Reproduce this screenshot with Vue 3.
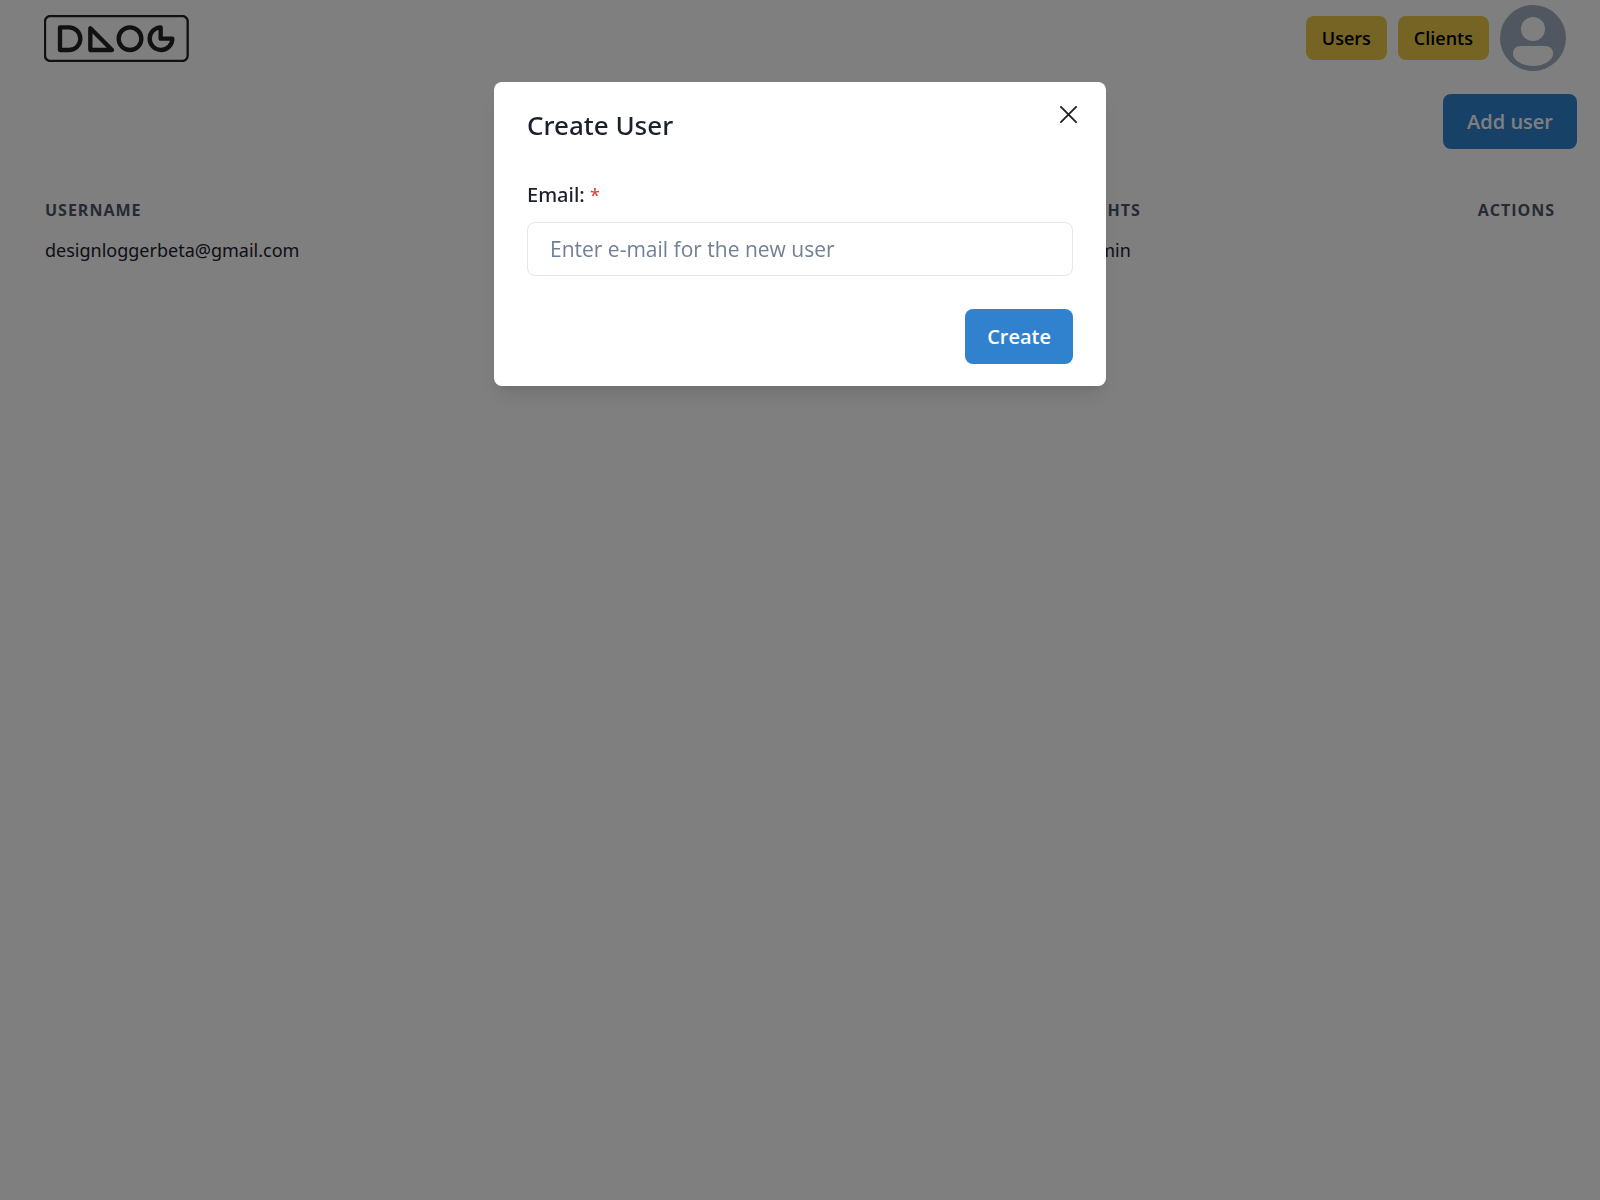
<script setup>
import { ref } from 'vue'

const email = ref('')
const users = ref([{ username: 'designloggerbeta@gmail.com', rights: 'admin' }])
</script>

<template>
  <div class="page">
    <header class="bar">
      <a href="#" class="logo" aria-label="Home">
        <svg viewBox="42 44 435 141" width="145" height="47" fill="none" stroke="#222" stroke-linejoin="round">
          <rect x="45" y="47" width="428" height="135" rx="16" stroke-width="7" />
          <g stroke-width="13">
            <path d="M90 81H117A34 34 0 0 1 117 149H90Z" />
            <path d="M181 84V149H246Z" />
            <circle cx="300" cy="115" r="34" />
            <path d="M392 81A34 34 0 1 0 427 115H392Z" />
          </g>
        </svg>
      </a>
      <nav class="nav">
        <button type="button" class="tab">Users</button>
        <button type="button" class="tab">Clients</button>
        <button type="button" class="avatar" aria-label="Account">
          <svg viewBox="0 0 66 66" width="66" height="66">
            <circle cx="33" cy="33" r="33" fill="#a0aec0" />
            <circle cx="33" cy="24" r="12" fill="#fff" />
            <path d="M21 41H45Q53 41 53 49C53 55 44 61 33 61S13 55 13 49Q13 41 21 41Z" fill="#fff" />
          </svg>
        </button>
      </nav>
    </header>

    <main class="content">
      <div class="tools">
        <button type="button" class="primary">Add user</button>
      </div>
      <table class="users">
        <thead>
          <tr><th>Username</th><th class="side">Rights</th><th class="side end">Actions</th></tr>
        </thead>
        <tbody>
          <tr v-for="user in users" :key="user.username">
            <td>{{ user.username }}</td><td>{{ user.rights }}</td><td></td>
          </tr>
        </tbody>
      </table>
    </main>

    <div class="overlay">
      <section class="modal" role="dialog" aria-modal="true" aria-labelledby="modal-title">
        <h2 id="modal-title">Create User</h2>
        <button type="button" class="close" aria-label="Close">
          <svg viewBox="0 0 18 18" width="17" height="17" stroke="#222" stroke-width="2" stroke-linecap="round">
            <path d="M1 1L17 17M17 1L1 17" />
          </svg>
        </button>
        <form @submit.prevent>
          <label for="email">Email: <span class="required">*</span></label>
          <input id="email" v-model="email" type="email" placeholder="Enter e-mail for the new user" />
          <div class="actions">
            <button type="submit" class="primary">Create</button>
          </div>
        </form>
      </section>
    </div>
  </div>
</template>

<style>
body {
  margin: 0;
  background: #fff;
}
</style>

<style scoped>
.page {
  min-height: 100vh;
  color: #1a202c;
  font-family: "Noto Sans", "Open Sans", sans-serif;
  font-size: 18px;
}
.page * {
  box-sizing: border-box;
}
button,
input {
  font: inherit;
}
button {
  border: 0;
  cursor: pointer;
}
.bar {
  display: flex;
  justify-content: space-between;
  align-items: center;
  height: 76px;
  padding: 0 34px 0 44px;
}
.logo svg,
.avatar svg,
.close svg {
  display: block;
}
.nav {
  display: flex;
  align-items: center;
  gap: 11px;
}
.tab,
.primary,
th,
input {
  font-family: "Open Sans", "Noto Sans", sans-serif;
}
.tab {
  height: 44px;
  padding: 0 16px;
  border-radius: 8px;
  background: #ecc94b;
  color: #000;
  font-size: 18px;
  font-weight: 600;
}
.avatar {
  padding: 0;
  border-radius: 50%;
  background: none;
}
.content {
  padding: 18px 23px 0;
}
.tools {
  display: flex;
  justify-content: flex-end;
}
.primary {
  height: 55px;
  padding: 0 22px;
  border-radius: 8px;
  background: #3182ce;
  color: #fff;
  font-size: 20px;
  font-weight: 600;
}
.tools .primary {
  padding: 0 24px;
}
.users {
  width: 100%;
  margin-top: 41px;
  border-collapse: collapse;
  table-layout: fixed;
  text-align: left;
}
th,
td {
  height: 40px;
  padding: 0 22px;
}
th {
  color: #4a5568;
  font-size: 16px;
  font-weight: 700;
  letter-spacing: 1px;
  text-transform: uppercase;
}
.side {
  width: 261px;
}
.end {
  text-align: right;
}
.overlay {
  position: fixed;
  inset: 0;
  display: flex;
  justify-content: center;
  align-items: flex-start;
  padding-top: 82px;
  background: rgba(0, 0, 0, 0.5);
}
.modal {
  position: relative;
  width: 100%;
  max-width: 612px;
  padding: 22px 33px;
  border-radius: 8px;
  background: #fff;
  box-shadow: 0 13px 20px -4px rgba(0, 0, 0, 0.1), 0 5px 8px -2px rgba(0, 0, 0, 0.05);
}
h2 {
  margin: 0;
  font-size: 26px;
  font-weight: 500;
  line-height: 42px;
}
.close {
  position: absolute;
  top: 16px;
  right: 21px;
  padding: 8px;
  background: none;
}
form {
  display: flex;
  flex-direction: column;
  padding-top: 33px;
}
label {
  margin-bottom: 11px;
  font-size: 20px;
  font-weight: 500;
  line-height: 32px;
}
.required {
  color: #e53e3e;
  font-size: 18px;
}
input {
  width: 100%;
  height: 54px;
  padding: 0 22px;
  border: 1px solid #e2e8f0;
  border-radius: 8px;
  color: #1a202c;
  font-size: 21px;
}
input::placeholder {
  color: #718096;
  opacity: 1;
}
.actions {
  display: flex;
  justify-content: flex-end;
  margin-top: 33px;
}
</style>
